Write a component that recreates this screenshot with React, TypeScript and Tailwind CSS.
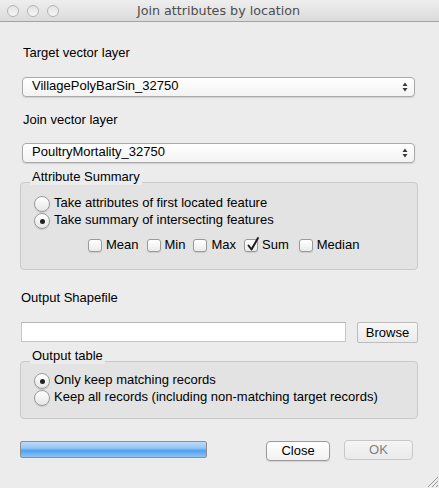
import React from "react";

function Radio({ checked }: { checked?: boolean }) {
  return (
    <span className="w-[16px] h-[16px] shrink-0 rounded-full border border-[#9a9a9a] bg-linear-to-b from-[#ffffff] to-[#e6e6e6] shadow-[0_1px_1px_rgba(0,0,0,0.12)] flex items-center justify-center">
      {checked && <span className="w-[5px] h-[5px] rounded-full bg-[#222]" />}
    </span>
  );
}

function Check({ checked, label }: { checked?: boolean; label: string }) {
  return (
    <span className="flex items-center gap-[4px]">
      <span className="relative w-[14px] h-[13px] shrink-0 rounded-[3px] border border-[#9a9a9a] bg-linear-to-b from-[#ffffff] to-[#ebebeb] shadow-[0_1px_1px_rgba(0,0,0,0.1)]">
        {checked && (
          <svg className="absolute left-[1px] top-[-4px]" width="14" height="16" viewBox="0 0 14 16">
            <path d="M2.5 9.5 L5.5 13.5 L12 2" fill="none" stroke="#1e1e1e" strokeWidth="2" strokeLinecap="round" strokeLinejoin="round" />
          </svg>
        )}
      </span>
      <span>{label}</span>
    </span>
  );
}

function Combo({ value }: { value: string }) {
  return (
    <div className="ml-[2px] w-[393px] h-[20px] rounded-[4px] border border-[#a9a9a9] bg-linear-to-b from-[#ffffff] to-[#f3f3f3] shadow-[0_1px_1px_rgba(0,0,0,0.12)] flex items-center pl-[9px] pr-[6px]">
      <span className="flex-1 -mt-[2px]">{value}</span>
      <svg width="6" height="10" viewBox="0 0 6 10">
        <path d="M3 0.5 L5.5 4 L0.5 4 Z" fill="#3a3a3a" />
        <path d="M3 9.5 L5.5 6 L0.5 6 Z" fill="#3a3a3a" />
      </svg>
    </div>
  );
}

export default function App() {
  return (
    <div className="w-[439px] h-[488px] bg-[#ececec] flex flex-col text-[13px] leading-[16px] text-black overflow-hidden relative font-['Liberation_Sans',Arial,sans-serif]">
      {/* Title bar */}
      <div className="h-[22px] shrink-0 grid grid-cols-[1fr_auto_1fr] items-center bg-linear-to-b from-[#eeeeee] to-[#dbdbdb] border-b border-[#a3a3a3]">
        <div className="flex gap-[8px] pl-[7px]">
          <span className="w-[12px] h-[12px] rounded-full border border-[#b3b3b3] bg-linear-to-b from-[#e3e3e3] to-[#f6f6f6]" />
          <span className="w-[12px] h-[12px] rounded-full border border-[#b3b3b3] bg-linear-to-b from-[#e3e3e3] to-[#f6f6f6]" />
          <span className="w-[12px] h-[12px] rounded-full border border-[#b3b3b3] bg-linear-to-b from-[#e3e3e3] to-[#f6f6f6]" />
        </div>
        <div className="text-[12.7px] text-[#4d4d4d] font-['DejaVu_Sans',sans-serif] -ml-[2px]">Join attributes by location</div>
        <div />
      </div>

      <div className="flex flex-col px-[20px]">
        <div className="mt-[23px] pl-[3px]">Target vector layer</div>
        <div className="mt-[16px]">
          <Combo value="VillagePolyBarSin_32750" />
        </div>
        <div className="mt-[15px] pl-[3px]">Join vector layer</div>
        <div className="mt-[15px]">
          <Combo value="PoultryMortality_32750" />
        </div>

        {/* Attribute Summary */}
        <div className="mt-[6px] flex flex-col w-[398px]">
          <span className="self-start ml-[10px] px-[2px] bg-[#ececec] relative z-10 -mb-[3px]">Attribute Summary</span>
          <div className="h-[88px] rounded-[4px] border border-[#c9c9c9] bg-[#e3e3e3] flex flex-col pt-[13px] pl-[13px]">
            <div className="flex items-center gap-[4px] h-[16px]">
              <Radio />
              <span className="-mt-[2px]">Take attributes of first located feature</span>
            </div>
            <div className="flex items-center gap-[4px] h-[16px] mt-[1px]">
              <Radio checked />
              <span className="-mt-[2px]">Take summary of intersecting features</span>
            </div>
            <div className="flex items-center gap-[8px] h-[16px] mt-[8px] pl-[54px]">
              <Check label="Mean" />
              <Check label="Min" />
              <Check label="Max" />
              <Check label="Sum" checked />
              <span className="ml-[2px]"><Check label="Median" /></span>
            </div>
          </div>
        </div>

        <div className="mt-[20px] pl-[1px]">Output Shapefile</div>
        <div className="mt-[16px] flex items-start">
          <div className="ml-[1px] w-[325px] h-[20px] bg-white border border-[#c6c6c6] border-t-[#b5b5b5]" />
          <div className="ml-[11px] w-[61px] h-[21px] rounded-[2px] border border-[#bdbdbd] bg-linear-to-b from-[#f7f7f7] to-[#ebebeb] flex items-center justify-center">
            Browse
          </div>
        </div>

        {/* Output table */}
        <div className="mt-[5px] flex flex-col w-[398px]">
          <span className="self-start ml-[10px] px-[2px] bg-[#ececec] relative z-10 -mb-[3px]">Output table</span>
          <div className="h-[58px] rounded-[4px] border border-[#c9c9c9] bg-[#e3e3e3] flex flex-col pt-[11px] pl-[13px]">
            <div className="flex items-center gap-[4px] h-[16px]">
              <Radio checked />
              <span className="-mt-[2px]">Only keep matching records</span>
            </div>
            <div className="flex items-center gap-[4px] h-[16px] mt-[1px]">
              <Radio />
              <span className="-mt-[2px]">Keep all records (including non-matching target records)</span>
            </div>
          </div>
        </div>

        {/* Bottom row */}
        <div className="mt-[22px] flex items-start">
          <div className="w-[187px] h-[17px] rounded-[2px] border border-[#8f8f8f] bg-[linear-gradient(to_bottom,#bcdaf8,#97c6f4_40%,#4ea2ef_58%,#8dc2f3)]" />
          <div className="ml-[59px] w-[64px] h-[20px] rounded-[4px] border border-[#9b9b9b] bg-linear-to-b from-[#ffffff] to-[#f1f1f1] shadow-[0_1px_1px_rgba(0,0,0,0.12)] flex items-center justify-center">
            Close
          </div>
          <div className="ml-[14px] w-[69px] h-[20px] rounded-[4px] border border-[#c8c8c8] bg-linear-to-b from-[#f5f5f5] to-[#eaeaea] text-[#7f7f7f] flex items-center justify-center -mt-[1px]">
            OK
          </div>
        </div>
      </div>

      {/* Resize grip */}
      <svg className="absolute right-[1px] bottom-[1px]" width="11" height="11" viewBox="0 0 11 11">
        <path d="M1 11 L11 1 M5 11 L11 5 M9 11 L11 9" stroke="#9a9a9a" strokeWidth="1" />
      </svg>
    </div>
  );
}
